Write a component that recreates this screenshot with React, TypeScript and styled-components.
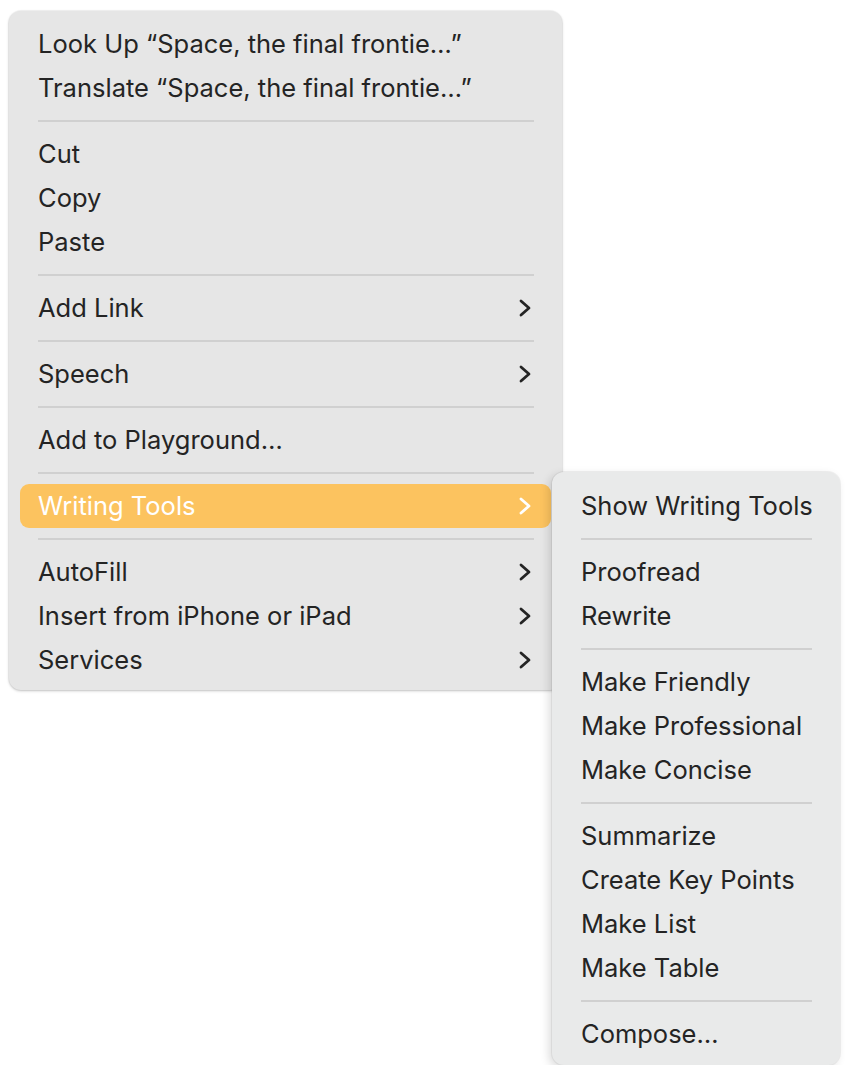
import styled, { createGlobalStyle } from "styled-components";

const GlobalStyle = createGlobalStyle`
  html, body {
    margin: 0;
    padding: 0;
    background: #ffffff;
  }
  body {
    font-family: Inter, "Liberation Sans", sans-serif;
    -webkit-font-smoothing: antialiased;
  }
`;

const Stage = styled.div`
  display: flex;
  flex-direction: row;
  align-items: flex-start;
  padding: 11px 0 0 9px;
`;

const Menu = styled.div<{ $width: number; $sub?: boolean }>`
  display: flex;
  flex-direction: column;
  width: ${(p) => p.$width}px;
  box-sizing: border-box;
  padding: ${(p) => (p.$sub ? "12px 11px 9px" : "11px 11px 8px")};
  background: ${(p) => (p.$sub ? "#e9eaea" : "#e6e6e6")};
  border-radius: 12px;
  box-shadow: ${(p) =>
    p.$sub
      ? "-3px 3px 10px rgba(0, 0, 0, 0.14), 0 0 0 1px rgba(0, 0, 0, 0.05)"
      : "0 1px 3px rgba(0, 0, 0, 0.22), 0 0 0 1px rgba(0, 0, 0, 0.04)"};
  margin-top: ${(p) => (p.$sub ? "461px" : "0")};
  margin-left: ${(p) => (p.$sub ? "-10px" : "0")};
  position: relative;
  z-index: ${(p) => (p.$sub ? 2 : 1)};
`;

const Item = styled.div<{ $active?: boolean }>`
  display: flex;
  align-items: center;
  justify-content: space-between;
  height: 44px;
  padding: 0 19px 0 18px;
  border-radius: 9px;
  font-size: 25.5px;
  letter-spacing: 0;
  color: ${(p) => (p.$active ? "#ffffff" : "#242424")};
  background: ${(p) => (p.$active ? "#fcc35f" : "transparent")};
  white-space: nowrap;
`;

const Label = styled.span`
  line-height: 44px;
`;

const Separator = styled.div`
  height: 22px;
  display: flex;
  align-items: center;
  padding: 0 17px 0 18px;

  &::after {
    content: "";
    flex: 1;
    height: 2px;
    background: #d0d0d0;
  }
`;

const Chevron = ({ color }: { color: string }) => (
  <svg width="14" height="20" viewBox="0 0 14 20" fill="none">
    <polyline
      points="3,3 11,10 3,17"
      stroke={color}
      strokeWidth="2.8"
      strokeLinecap="round"
      strokeLinejoin="round"
    />
  </svg>
);

type Entry = { label: string; sub?: boolean; active?: boolean } | "sep";

const mainItems: Entry[] = [
  { label: "Look Up \u201CSpace, the final frontie\u2026\u201D" },
  { label: "Translate \u201CSpace, the final frontie\u2026\u201D" },
  "sep",
  { label: "Cut" },
  { label: "Copy" },
  { label: "Paste" },
  "sep",
  { label: "Add Link", sub: true },
  "sep",
  { label: "Speech", sub: true },
  "sep",
  { label: "Add to Playground\u2026" },
  "sep",
  { label: "Writing Tools", sub: true, active: true },
  "sep",
  { label: "AutoFill", sub: true },
  { label: "Insert from iPhone or iPad", sub: true },
  { label: "Services", sub: true },
];

const writingItems: Entry[] = [
  { label: "Show Writing Tools" },
  "sep",
  { label: "Proofread" },
  { label: "Rewrite" },
  "sep",
  { label: "Make Friendly" },
  { label: "Make Professional" },
  { label: "Make Concise" },
  "sep",
  { label: "Summarize" },
  { label: "Create Key Points" },
  { label: "Make List" },
  { label: "Make Table" },
  "sep",
  { label: "Compose\u2026" },
];

function renderEntries(entries: Entry[]) {
  return entries.map((entry, index) => {
    if (entry === "sep") {
      return <Separator key={index} />;
    }
    return (
      <Item key={index} $active={entry.active}>
        <Label>{entry.label}</Label>
        {entry.sub && <Chevron color={entry.active ? "#ffffff" : "#242424"} />}
      </Item>
    );
  });
}

function App() {
  return (
    <>
      <GlobalStyle />
      <Stage>
        <Menu $width={553}>{renderEntries(mainItems)}</Menu>
        <Menu $width={288} $sub>
          {renderEntries(writingItems)}
        </Menu>
      </Stage>
    </>
  );
}

export default App;
